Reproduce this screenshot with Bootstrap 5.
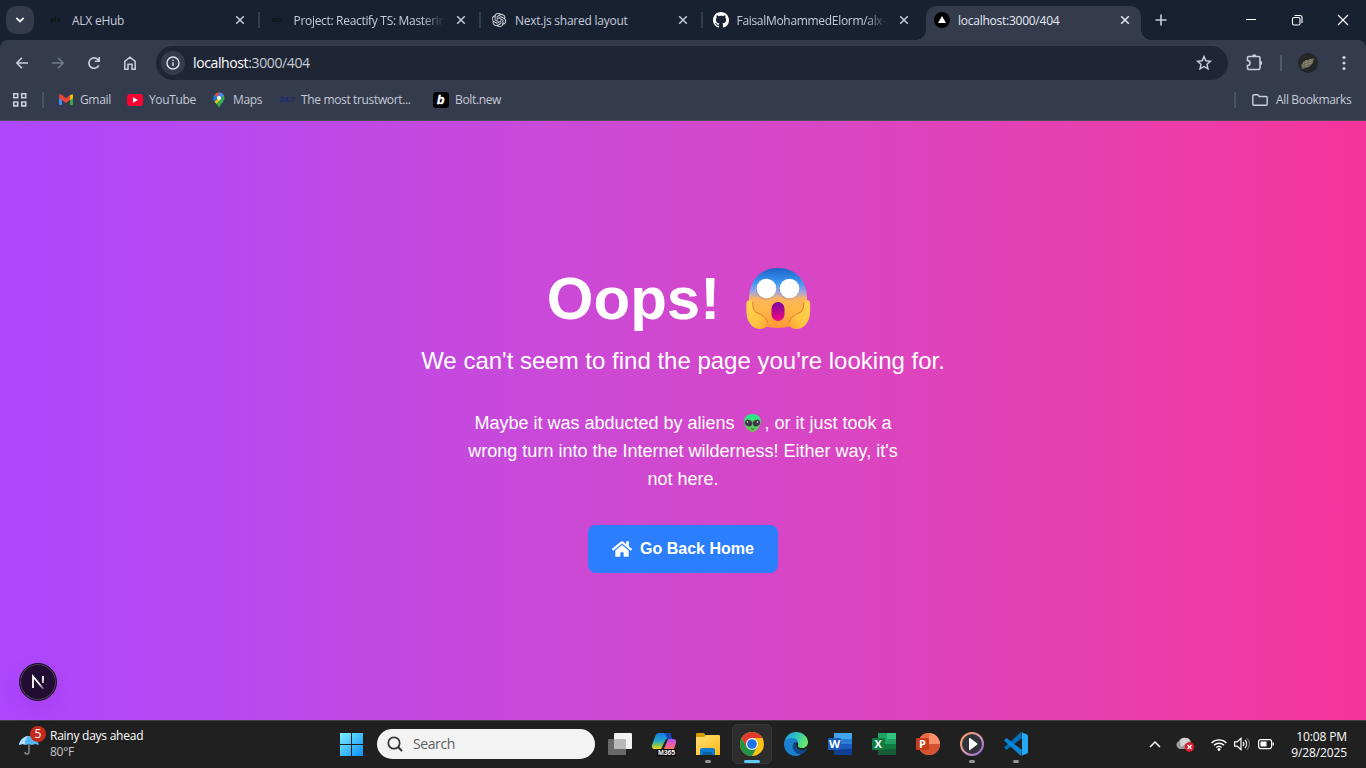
<!DOCTYPE html>
<html lang="en">
<head>
<meta charset="utf-8">
<meta name="viewport" content="width=device-width, initial-scale=1">
<title>localhost:3000/404</title>
<link rel="stylesheet" href="https://cdn.jsdelivr.net/npm/bootstrap@5.3.0/dist/css/bootstrap.min.css">
<style>
body{width:1366px;height:768px;overflow:hidden;font:12px/16px "Open Sans","Noto Sans",sans-serif;letter-spacing:-.25px;color:#c5cbdc;background:#202020}
svg{display:block;flex:none;overflow:visible}
.strip{height:40px;background:#182131}
.tabsearch{width:28px;height:28px;margin:6px 4px 0 6px;border-radius:10px;background:#333b4d}
.tabitem{width:221.5px;height:40px;padding-left:10px;position:relative}
.tabitem.sep::after{content:"";position:absolute;right:0;top:12px;width:2px;height:16px;background:#353e50}
.favbox{width:16px;height:16px;flex:none}
.tabtitle{width:151px;margin-left:8px;overflow:hidden;white-space:nowrap;padding-top:2px}
.fade-end{letter-spacing:-.31px;-webkit-mask-image:linear-gradient(90deg,#000 85%,transparent);mask-image:linear-gradient(90deg,#000 85%,transparent)}
.tabclose{margin-left:11.5px}
.activetab{width:215px;height:34px;margin:6px 0 0 2px;padding:0 0 6px 8px;background:#333b4d;border-radius:10px 10px 0 0;color:#e6e9f2;position:relative}
.activetab .tabclose{margin-left:11px}
.activetab::before,.activetab::after{content:"";position:absolute;bottom:0;width:10px;height:10px}
.activetab::before{left:-10px;background:radial-gradient(circle at 0 0,transparent 9.6px,#333b4d 10px)}
.activetab::after{right:-10px;background:radial-gradient(circle at 100% 0,transparent 9.6px,#333b4d 10px)}
.toolrow{height:45px;background:#333b4d;border-radius:8px 8px 0 0;padding-left:4px}
.toolwrap{background:#182131}
.cell36{width:36px;height:36px}
.omni{width:1072px;height:34px;margin-left:8px;border-radius:17px;background:#1e2636;padding:0 16px 0 5px;font-size:14px;letter-spacing:-.38px;color:#c5cad4}
.infob{width:24px;height:24px;border-radius:12px;background:#333b4d;margin-right:8px}
.marks{height:36px;background:#333b4d;border-bottom:1px solid #494e58;padding:0 0 5px 12px;color:#c7cad6;letter-spacing:-.35px}
.marks span{white-space:nowrap}
.vsep{width:2px;height:16px;background:#4a5265;flex:none}
.tinylogo{font:bold 7px/8px "DejaVu Sans",sans-serif;letter-spacing:-.3px;color:#0e1416}
.stage{height:599px;background:#d13fcb;background:linear-gradient(to right in oklab,#ad46ff,#f6339a);color:#fff;font-family:"Liberation Sans",Arial,sans-serif;letter-spacing:0;position:relative}
.stage h1{font-size:60px;line-height:60px;font-weight:700;margin-bottom:16px}
.sub{font-size:24px;line-height:32px;margin-bottom:32px}
.story{font-size:18px;line-height:28px;width:448px;margin-bottom:32px}
.homebtn{width:190px;height:48px;border-radius:8px;background:#2b7fff;border:0;font-size:16px;line-height:24px;font-weight:700;color:#fff;padding:0}
.devbadge{position:absolute;left:19px;top:542px;width:38px;height:38px;border-radius:50%;background:#220e33;border:1px solid #1b0d28;box-shadow:inset 0 0 0 1px #54425f,0 8px 20px rgba(90,20,140,.12)}
.taskbar{height:48px;background:#202020;border-top:1px solid #414141;color:#fff;padding:0 0 1px 19px}
.weather{width:321px}
.weathericon{width:31px;height:40px;position:relative}
.alertnum{position:absolute;left:11px;top:2px;width:16px;height:16px;border-radius:8px;background:#c42b1c;font-size:12px;line-height:16px;letter-spacing:0;text-align:center}
.searchbox{width:218px;height:30px;border-radius:15px;background:#f3f3f3;color:#5e5e5e;margin:0 3px 0 14px;padding:0 0 0 10px;font-size:14px;letter-spacing:-.4px}
.app{width:44px;height:46px;position:relative}
.app.open::before{content:"";position:absolute;left:2px;top:3px;width:40px;height:40px;border-radius:5px;background:#2d2d2d;border:1px solid #363636}
.app svg{position:relative}
.run::after{content:"";position:absolute;bottom:4px;left:19px;width:6px;height:3px;border-radius:2px;background:#979797}
.run.open::after{left:14px;width:16px;background:#5ec9f8}
.tray svg{margin-right:7px}
.clock{margin-right:19px;text-align:right;white-space:nowrap;letter-spacing:-.13px;padding-top:1px}
</style>
</head>
<body>
<svg width="0" height="0" style="position:absolute"><defs>
<symbol id="x" viewBox="0 0 10 10"><path d="M1.2 1.2l7.6 7.6M8.8 1.2L1.2 8.8" stroke="currentColor" stroke-width="1.5" fill="none"/></symbol>
<linearGradient id="win" x1="0" y1="0" x2="1" y2="1"><stop stop-color="#7df0ff"/><stop offset="1" stop-color="#0a8dfa"/></linearGradient>
<linearGradient id="face" x1="0" y1="0" x2="0" y2="1"><stop stop-color="#1c62c8"/><stop offset=".25" stop-color="#3f97f2"/><stop offset=".4" stop-color="#a3a6e0"/><stop offset=".52" stop-color="#ffb45c"/><stop offset=".7" stop-color="#ffb845"/><stop offset="1" stop-color="#ff9738"/></linearGradient>
<linearGradient id="hand" x1="0" y1="0" x2="1" y2="1"><stop stop-color="#ffd452"/><stop offset=".6" stop-color="#ffc644"/><stop offset="1" stop-color="#f9a030"/></linearGradient>
<linearGradient id="mouth" x1="0" y1="0" x2="0" y2="1"><stop stop-color="#7a07a0"/><stop offset="1" stop-color="#f7087f"/></linearGradient>
<linearGradient id="alien" x1="0" y1="0" x2="0" y2="1"><stop stop-color="#23ec91"/><stop offset="1" stop-color="#6fc04e"/></linearGradient>
<linearGradient id="fold" x1="0" y1="0" x2="1" y2="1"><stop stop-color="#ffdf77"/><stop offset="1" stop-color="#ffb915"/></linearGradient>
<linearGradient id="edge" x1="0" y1="0" x2="1" y2=".3"><stop stop-color="#229de0"/><stop offset=".55" stop-color="#2dc3c0"/><stop offset="1" stop-color="#69e66d"/></linearGradient>
<linearGradient id="media" x1="0" y1="0" x2="1" y2="1"><stop stop-color="#ff9b55"/><stop offset=".5" stop-color="#dc9cae"/><stop offset="1" stop-color="#8f64de"/></linearGradient>
<linearGradient id="copA" x1="0" y1="0" x2="0" y2="1"><stop stop-color="#1279e0"/><stop offset=".5" stop-color="#20a9cc"/><stop offset=".8" stop-color="#91c846"/><stop offset="1" stop-color="#ffd91c"/></linearGradient>
<linearGradient id="copB" x1="0" y1="0" x2="0" y2="1"><stop stop-color="#a753ef"/><stop offset=".5" stop-color="#eb5bae"/><stop offset="1" stop-color="#ff765e"/></linearGradient>
<linearGradient id="nfade" x1="0" y1="0" x2="1" y2="1"><stop offset=".6" stop-color="#fff"/><stop offset="1" stop-color="#fff" stop-opacity=".25"/></linearGradient>
</defs></svg>

<!-- Tab strip -->
<header class="strip d-flex">
  <div class="tabsearch d-flex align-items-center justify-content-center"><svg width="10" height="6"><path d="M1.3.8L5 4.4 8.700.8" stroke="#f0f2f8" stroke-width="1.8" fill="none"/></svg></div>
  <div class="tabitem sep d-flex align-items-center"><div class="favbox tinylogo pt-1" style="padding-left:2px">alx</div><div class="tabtitle">ALX eHub</div><svg class="tabclose" width="10" height="10"><use href="#x"/></svg></div>
  <div class="tabitem sep d-flex align-items-center"><div class="favbox tinylogo pt-1" style="padding-left:2px">alx</div><div class="tabtitle fade-end">Project: Reactify TS: Mastering</div><svg class="tabclose" width="10" height="10"><use href="#x"/></svg></div>
  <div class="tabitem sep d-flex align-items-center"><svg class="favbox" width="16" height="16" viewBox="-1 -1 18 18" fill="#dfe2e8"><path d="M14.949 6.547a3.940 3.940 0 0 0-.348-3.273 4.110 4.110 0 0 0-4.400-1.934A4.100 4.100 0 0 0 8.423.2 4.150 4.150 0 0 0 6.305.086a4.100 4.100 0 0 0-1.891.948 4.040 4.040 0 0 0-1.158 1.753 4.100 4.100 0 0 0-1.563.679A4 4 0 0 0 .554 4.720a3.990 3.990 0 0 0 .502 4.731 3.940 3.940 0 0 0 .346 3.274 4.110 4.110 0 0 0 4.402 1.933c.382.425.852.764 1.377.995.526.231 1.095.35 1.670.346 1.780.002 3.358-1.132 3.901-2.804a4.100 4.100 0 0 0 1.563-.68 4 4 0 0 0 1.140-1.253 3.990 3.990 0 0 0-.506-4.716m-6.097 8.406a3.050 3.050 0 0 1-1.945-.694l.096-.054 3.230-1.838a.53.53 0 0 0 .265-.455v-4.490l1.366.778q.02.011.025.035v3.722c-.003 1.653-1.361 2.992-3.037 2.996m-6.530-2.750a2.950 2.950 0 0 1-.36-2.010l.095.057L5.290 12.090a.53.53 0 0 0 .527 0l3.949-2.246v1.555a.05.05 0 0 1-.022.041L6.473 13.300c-1.454.826-3.311.335-4.150-1.098m-.85-6.940A3.020 3.020 0 0 1 3.070 3.949v3.785a.51.51 0 0 0 .262.451l3.930 2.237-1.366.779a.05.05 0 0 1-.048 0L2.585 9.342a2.980 2.980 0 0 1-1.113-4.094zm11.216 2.571L8.747 5.576l1.362-.776a.05.05 0 0 1 .048 0l3.265 1.860a3 3 0 0 1 1.173 1.207 2.960 2.960 0 0 1-.27 3.200 3.050 3.050 0 0 1-1.360.997V8.279a.52.52 0 0 0-.276-.445m1.360-2.015-.097-.057-3.226-1.855a.53.53 0 0 0-.53 0L6.249 6.153V4.598a.04.04 0 0 1 .019-.04L9.533 2.700a3.070 3.070 0 0 1 3.257.139c.474.325.843.778 1.066 1.303.223.526.289 1.103.191 1.664zM5.503 8.575 4.139 7.800a.05.05 0 0 1-.026-.037V4.049c0-.57.166-1.127.476-1.607s.752-.864 1.275-1.105a3.080 3.080 0 0 1 3.234.41l-.096.054-3.230 1.838a.53.53 0 0 0-.265.455zm.742-1.577 1.758-1 1.762 1v2l-1.755 1-1.762-1z"/></svg><div class="tabtitle">Next.js shared layout</div><svg class="tabclose" width="10" height="10"><use href="#x"/></svg></div>
  <div class="tabitem d-flex align-items-center"><svg class="favbox" width="16" height="16" viewBox="0 0 16 16" fill="#fff"><path d="M8 0C3.58 0 0 3.58 0 8c0 3.54 2.29 6.53 5.47 7.59.4.07.55-.17.55-.38 0-.19-.01-.82-.01-1.49-2.01.37-2.53-.49-2.69-.94-.09-.23-.48-.94-.82-1.13-.28-.15-.68-.52-.01-.53.63-.01 1.08.58 1.23.82.72 1.21 1.87.87 2.33.66.07-.52.28-.87.51-1.07-1.78-.2-3.64-.89-3.64-3.95 0-.87.31-1.59.82-2.15-.08-.2-.36-1.02.08-2.12 0 0 .67-.21 2.2.82.64-.18 1.32-.27 2-.27s1.36.09 2 .27c1.53-1.04 2.2-.82 2.2-.82.44 1.1.16 1.92.08 2.12.51.56.82 1.27.82 2.15 0 3.07-1.87 3.75-3.65 3.95.29.25.54.73.54 1.48 0 1.07-.01 1.93-.01 2.2 0 .21.15.46.55.38A8.01 8.01 0 0 0 16 8c0-4.42-3.58-8-8-8z"/></svg><div class="tabtitle fade-end">FaisalMohammedElorm/alx-project</div><svg class="tabclose" width="10" height="10"><use href="#x"/></svg></div>
  <div class="activetab d-flex align-items-center"><svg width="16" height="16"><circle cx="8" cy="8" r="8" fill="#000"/><path d="M8 4l4 7H4z" fill="#fff"/></svg><div class="tabtitle">localhost:3000/404</div><svg class="tabclose" width="10" height="10"><use href="#x"/></svg></div>
  <svg width="225" height="40"><path d="M14.500 20h11M20 14.500v11" stroke="#c6cce0" stroke-width="1.6"/><g stroke="#fff" stroke-width="1.1" fill="none"><path d="M105 19.500h10M197 15l10 10M207 15l-10 10"/><rect x="151.500" y="17.500" width="7.500" height="7.500" rx="1.500"/><path d="M153.500 15.500h5.500a2 2 0 0 1 2 2v5.500"/></g></svg>
</header>

<!-- Address bar -->
<div class="toolwrap"><nav class="toolrow d-flex align-items-center">
  <div class="cell36 d-flex align-items-center justify-content-center"><svg width="12" height="12" fill="none" stroke="#c8cedf" stroke-width="1.6"><path d="M12 6H1M6 .7L.9 6 6 11.300"/></svg></div>
  <div class="cell36 d-flex align-items-center justify-content-center"><svg width="12" height="12" fill="none" stroke="#71798b" stroke-width="1.6"><path d="M0 6h11M6 .7L11.100 6 6 11.300"/></svg></div>
  <div class="cell36 d-flex align-items-center justify-content-center"><svg width="12" height="12" fill="none" stroke="#c8cedf" stroke-width="1.6"><path d="M10.800 8.300A5.200 5.200 0 1 1 9.700 2.300L11 3.700M11.200 0v4.300H6.800"/></svg></div>
  <div class="cell36 d-flex align-items-center justify-content-center"><svg width="12" height="14" fill="none" stroke="#c8cedf" stroke-width="1.5"><path d="M.8 5.300L6 1.200l5.200 4.100v7.900H8V8.200H4v5H.8z"/></svg></div>
  <div class="omni d-flex align-items-center">
    <div class="infob d-flex align-items-center justify-content-center"><svg width="14" height="14"><circle cx="7" cy="7" r="6" fill="none" stroke="#e3e6ef" stroke-width="1.4"/><path d="M7 6.200V10M7 3.700v1.400" stroke="#e3e6ef" stroke-width="1.4"/></svg></div>
    <div class="flex-grow-1"><span class="text-white">localhost</span>:3000/404</div>
    <svg width="16" height="16" fill="none" stroke="#cdd2df" stroke-width="1.4"><path d="M8 1.500l1.800 4.300 4.700.4-3.500 3.100 1 4.600-4-2.400-4 2.400 1-4.600-3.500-3.100 4.700-.4z"/></svg>
  </div>
  <svg width="138" height="36" fill="none"><path d="M20.500 11.500h10a1.500 1.500 0 0 1 1.500 1.500v10a1.500 1.500 0 0 1-1.500 1.500h-10a1.500 1.500 0 0 1-1-1.500v-2.500a2.500 2.500 0 0 0 0-5V13a1.500 1.500 0 0 1 1-1.500z" stroke="#c8cedf" stroke-width="1.600"/><path d="M24 11.500a2.200 2.200 0 0 1 4.400 0zM32 15.800a2.200 2.200 0 0 1 0 4.400z" fill="#c8cedf"/><path d="M53 10v16" stroke="#515a6c" stroke-width="2"/><circle cx="80" cy="18" r="10" fill="#242628"/><path d="M73 20l3-4 10-3-1 5-4 4-7 2z" fill="#6c6757"/><path d="M75 18l10-3M75 21l8-3M78 15l1 7M82 14l1 6" stroke="#b0a98e" stroke-width=".8" stroke-dasharray="1 1"/><g fill="#c8cedf"><circle cx="116" cy="12.500" r="1.600"/><circle cx="116" cy="18" r="1.600"/><circle cx="116" cy="23.500" r="1.600"/></g></svg>
</nav></div>

<!-- Bookmarks -->
<nav class="marks d-flex align-items-center">
  <svg width="16" height="14" style="margin-right:14px" fill="none" stroke="#c8cddd" stroke-width="1.6"><path d="M1.800.8h3.900v3.900H1.800zM9.800.8h3.900v3.900H9.800zM1.800 9h3.900v3.900H1.800zM9.800 9h3.900v3.900H9.800z"/></svg>
  <i class="vsep"></i>
  <svg width="14" height="12" style="margin:0 7px 0 15px"><path d="M0 2v8a1 1 0 0 0 1 1h2V4z" fill="#4285f4"/><path d="M14 2v8a1 1 0 0 1-1 1h-2V4z" fill="#34a853"/><path d="M11 1.200L13 .2a1 1 0 0 1 1 1.200V4l-3 2.500z" fill="#fbbc04"/><path d="M0 1.500C0 .2 1.500-.2 2.500.6L7 4.200 11 1v5L7 9 0 4z" fill="#ea4335"/></svg>
  <span style="width:47px">Gmail</span>
  <svg width="16" height="12" style="margin-right:6px"><rect width="16" height="12" rx="3" fill="#ff0033"/><path d="M6 3.300L11 6 6 8.700z" fill="#fff"/></svg>
  <span style="width:63px">YouTube</span>
  <svg width="14" height="16" viewBox="0 0 14 16" style="margin-right:7px"><path d="M7 .5a5.500 5.500 0 0 1 5.500 5.500c0 4-4 5.500-5.500 10C5.500 11.500 1.500 10 1.500 6A5.500 5.500 0 0 1 7 .5z" fill="#34a853"/><path d="M7 .5A5.500 5.500 0 0 0 2.800 2.500L5.500 5 9 1z" fill="#ea4335"/><path d="M8 .6L5.500 4.500l3 2 3.200-3.500A5.500 5.500 0 0 0 8 .6z" fill="#4285f4"/><path d="M5.500 7.500l-3 2.200 1.800 2L9 7z" fill="#fbbc04"/><path d="M2.800 2.500A5.500 5.500 0 0 0 2.500 9.500L5 7z" fill="#1a73e8"/><circle cx="7" cy="6" r="2" fill="#fff"/></svg>
  <span style="width:46px">Maps</span>
  <b class="tinylogo" style="width:22px;color:#1f2c73;font-style:italic">24/7</b>
  <span style="width:132px">The most trustwort...</span>
  <svg width="16" height="16" style="margin-right:6px"><rect width="16" height="16" rx="3.500" fill="#000"/><text x="4" y="12" font-family="Liberation Sans" font-size="12" font-weight="700" font-style="italic" fill="#fff" stroke="#fff" stroke-width=".5">b</text></svg>
  <span>Bolt.new</span>
  <i class="vsep ms-auto"></i>
  <svg width="16" height="12" fill="none" stroke="#c8cddd" stroke-width="1.400" style="margin:0 8px 0 16px"><path d="M.8 2A1.200 1.200 0 0 1 2 .8h3.800l1.500 1.700H14a1.200 1.200 0 0 1 1.200 1.200V10a1.200 1.200 0 0 1-1.200 1.200H2A1.200 1.200 0 0 1 .8 10z"/></svg>
  <span style="width:90px">All Bookmarks</span>
</nav>

<!-- Not-found page -->
<main class="stage d-flex flex-column align-items-center justify-content-center text-center">
  <h1 class="d-flex">Oops!<svg width="82" height="60" style="margin-left:17px"><g transform="translate(9 -1)">
    <path d="M32 0C50 0 61 13 61 31 61 49 52 60 32 60S3 49 3 31C3 13 14 0 32 0z" fill="url(#face)"/>
    <circle cx="20" cy="22" r="9.800" fill="#6f6f99" opacity=".3"/><circle cx="43" cy="22" r="9.800" fill="#6f6f99" opacity=".3"/><circle cx="20.500" cy="20.500" r="9.800" fill="#fff"/><circle cx="43.500" cy="20.500" r="9.800" fill="#fff"/>
    <rect x="25.500" y="34" width="13" height="19" rx="6.500" fill="url(#mouth)"/>
    <g id="palm"><path d="M.5 34q2.500-4 6 0 0 7 3 10 12 5 12 11 0 6-8 6Q7 61 3 54-.5 49 .5 34z" fill="url(#hand)"/><path d="M6.500 34q0 7 3 10 12 5 12 11" stroke="#e07f2c" stroke-width="1" fill="none"/></g><use href="#palm" transform="matrix(-1 0 0 1 64.500 0)"/></g></svg></h1>
  <p class="sub">We can't seem to find the page you're looking for.</p>
  <p class="story">Maybe it was abducted by aliens <svg class="d-inline-block" width="25" height="18" viewBox="0 0 25 18" style="vertical-align:-3px"><path d="M12.500 0C17.500 0 21 3 21 7.500S16 18 12.500 18 4 12 4 7.500 7.500 0 12.500 0z" fill="url(#alien)"/><ellipse cx="8.500" cy="9" rx="3.800" ry="3.200" transform="rotate(30 8.500 9)" fill="#403645"/><ellipse cx="16.500" cy="9" rx="3.800" ry="3.200" transform="rotate(-30 16.500 9)" fill="#403645"/><circle cx="7.500" cy="8" r=".9" fill="#b8b3bd"/><circle cx="17.500" cy="8" r=".9" fill="#b8b3bd"/><path d="M11 14.700q1.500 1 3 0" stroke="#315b34" fill="none"/></svg>, or it just took a wrong turn into the Internet wilderness! Either way, it's not here.</p>
  <button class="btn homebtn d-flex align-items-center justify-content-center gap-2"><svg width="20" height="20" viewBox="0 0 576 512" fill="#fff"><path d="M280.370 148.260L96 300.110V464a16 16 0 0 0 16 16l112.060-.29a16 16 0 0 0 15.920-16V368a16 16 0 0 1 16-16h64a16 16 0 0 1 16 16v95.640a16 16 0 0 0 16 16.050L464 480a16 16 0 0 0 16-16V300L295.670 148.260a12.190 12.190 0 0 0-15.300 0zM571.600 251.470L488 182.560V44.050a12 12 0 0 0-12-12h-56a12 12 0 0 0-12 12v72.610L318.470 43a48 48 0 0 0-61 0L4.340 251.470a12 12 0 0 0-1.600 16.900l25.500 31A12 12 0 0 0 45.150 301l235.220-193.740a12.190 12.190 0 0 1 15.300 0L530.900 301a12 12 0 0 0 16.900-1.600l25.500-31a12 12 0 0 0-1.700-16.930z"/></svg>Go Back Home</button>
  <div class="devbadge d-flex align-items-center justify-content-center"><svg width="14" height="14"><path d="M2 13V1.500L12.500 14M12 1v7" stroke="url(#nfade)" stroke-width="1.800" fill="none"/></svg></div>
</main>

<!-- Taskbar -->
<footer class="taskbar d-flex align-items-center">
  <div class="weather d-flex align-items-center"><div class="weathericon"><svg width="20" height="40"><path d="M0 21C1 15 6 12 10 12s9 3 10 9l-4-1-3 1-3-1-3 1-3-1z" fill="#55b5f3"/><path d="M0 21c1-6 6-9 10-9-4 3-4 6-4 8.500l-3-.5z" fill="#b4dcff"/><path d="M10 20v8q0 2-2 2t-2-2" stroke="#8c8c8c" stroke-width="1.400" fill="none"/></svg><span class="alertnum">5</span></div><div><div>Rainy days ahead</div><div style="color:#c6c6c6">80°F</div></div></div>
  <svg width="23" height="23" fill="url(#win)"><path d="M0 0h23v23H0z"/><path d="M11 0h1v23h-1zM0 11h23v1H0z" fill="#202020"/></svg>
  <div class="searchbox d-flex align-items-center"><svg width="16" height="16" style="margin-right:10px" fill="none" stroke="#333" stroke-width="1.700"><circle cx="7" cy="7" r="5.700"/><path d="M11 11l4 4" stroke-width="2"/></svg>Search</div>
  <div class="app d-flex align-items-center justify-content-center"><svg width="24" height="24"><rect x="6" y="1" width="18" height="16" rx="1" fill="#f1f1f1"/><rect y="7" width="18" height="16" rx="1" fill="#777" opacity=".85"/><path d="M6 7h12v10H6z" fill="#b8b8b8"/></svg></div>
  <div class="app d-flex align-items-center justify-content-center"><svg width="24" height="24"><path d="M7 1h10q2 0 2 3l1 3h-6L9 17H3q-4 0-3-4L3 5q1-4 4-4z" fill="url(#copA)"/><path d="M12 1h5q2 0 2 3l1 3h-5q-1-5-3-6z" fill="#1746b9"/><path d="M16 7h5q4 0 3 4l-2 6H12z" fill="url(#copB)"/><path d="M5 17h19v7H5z" fill="#000"/><text x="6" y="23" font-family="Liberation Sans" font-size="7" font-weight="700" fill="#fff" textLength="17">M365</text></svg></div>
  <div class="app run d-flex align-items-center justify-content-center"><svg width="24" height="24"><path d="M0 2q0-1 1-1h7l3 4H0z" fill="#d79b05"/><path d="M0 5h8l2-2h13q1 0 1 1v19H0z" fill="url(#fold)"/><path d="M4 23v-5q0-2 2-2h11q2 0 2 2v5z" fill="#0d79d0"/><path d="M7 20h9v3H7z" fill="#0c5f9f"/></svg></div>
  <div class="app run open d-flex align-items-center justify-content-center"><svg width="24" height="24"><circle cx="12" cy="12" r="12" fill="#fbc116"/><path d="M1.600 6A12 12 0 0 0 12 24L17.200 15 6.800 15z" fill="#229342"/><path d="M1.600 6A12 12 0 0 1 22.400 6H12L6.800 15z" fill="#e33b2e"/><circle cx="12" cy="12" r="6" fill="#fff"/><circle cx="12" cy="12" r="4.800" fill="#1a73e8"/></svg></div>
  <div class="app d-flex align-items-center justify-content-center"><svg width="24" height="24"><path d="M0 12C1 4 6 0 12 0c7 0 12 5 12 10 0 4-3 6-6 6-3 0-5-1-4-3 1-3-2-6-6-6-4 0-7 2-8 5z" fill="url(#edge)"/><path d="M0 12C0 8 4 6 8 6c4 0 6 3 6 5-3-2-6 1-5 5 1 3 4 6 8 6-1 1-3 2-5 2C5 24 0 19 0 12z" fill="#1b7fd2"/><path d="M12.500 10C10 11 9 13 9 15c0 5 5 8 9 7 2-1 4-3 5-5 0-1 0-1-1 0-3 2-10 1-10-4 0-1 0-2 .5-3z" fill="#114a8b"/></svg></div>
  <div class="app d-flex align-items-center justify-content-center"><svg width="24" height="24"><path d="M6 1h18v6H6z" fill="#41a5ee"/><path d="M6 7h18v5H6z" fill="#2b7cd3"/><path d="M6 12h18v5H6z" fill="#185abd"/><path d="M6 17h18v6H6z" fill="#103f91"/><rect y="6" width="13" height="12" rx="1" fill="#185abd"/><text x="1" y="16" font-family="Open Sans" font-size="11" font-weight="700" fill="#fff" textLength="11" lengthAdjust="spacingAndGlyphs">W</text></svg></div>
  <div class="app d-flex align-items-center justify-content-center"><svg width="24" height="24"><path d="M6 1h18v22H6z" fill="#21a366"/><path d="M15 1h9v6h-9z" fill="#33c481"/><path d="M6 12h9v5H6z" fill="#107c41"/><path d="M15 12h9v5h-9z" fill="#107c41"/><path d="M6 17h18v6H6z" fill="#185c37"/><rect y="6" width="13" height="12" rx="1" fill="#107c41"/><text x="2.500" y="16" font-family="Open Sans" font-size="11" font-weight="700" fill="#fff">X</text></svg></div>
  <div class="app d-flex align-items-center justify-content-center"><svg width="24" height="24"><circle cx="13" cy="12" r="11" fill="#ff8f6b"/><path d="M2 12h22A11 11 0 0 1 2 12z" fill="#d35230"/><path d="M13 1v11H2A11 11 0 0 1 13 1z" fill="#ed6c47"/><rect y="6" width="13" height="12" rx="1" fill="#c43e1c"/><text x="3" y="16" font-family="Open Sans" font-size="11" font-weight="700" fill="#fff">P</text></svg></div>
  <div class="app run d-flex align-items-center justify-content-center"><svg width="24" height="24"><circle cx="12" cy="12" r="11" fill="#30333a" stroke="url(#media)" stroke-width="2"/><path d="M9 6.500q0-1 1-.4l7 5.100q1 .8 0 1.600l-7 5.100q-1 .6-1-.4z" fill="#fff"/></svg></div>
  <div class="app run d-flex align-items-center justify-content-center"><svg width="24" height="24"><path d="M17 0L0 15.500 2.500 18 18 6z" fill="#0070b8"/><path d="M17 24L0 8.500 2.500 6 18 18z" fill="#0a86d8"/><path d="M17 0l6 2.500q1 .5 1 1.500v16q0 1-1 1.500L17 24q1-.5 1-2V2q0-1.500-1-2z" fill="#29a8f2"/></svg></div>
  <div class="tray ms-auto d-flex align-items-center">
    <svg width="12" height="8" style="margin-right:17px"><path d="M1 7l5-5 5 5" stroke="#fff" stroke-width="1.500" fill="none"/></svg>
    <svg width="17" height="16" style="margin-right:16px"><path d="M0 12a4 4 0 0 1 1-7q2-4 7-3 4 0 5 4v7H1z" fill="#9a9a9a"/><path d="M2 5q2-4 6-3 3 0 4 3L3 11z" fill="#d2d2d2"/><circle cx="11.500" cy="11" r="4.800" fill="#d51b2b"/><path d="M9.500 9l4 4M13.500 9l-4 4" stroke="#fff" stroke-width="1.300"/></svg>
    <svg width="16" height="13" fill="none" stroke="#fff" stroke-width="1.300"><path d="M.6 5a10.500 10.500 0 0 1 14.800 0M3 7.300a7.100 7.100 0 0 1 10 0M5.300 9.600a3.800 3.800 0 0 1 5.400 0"/><circle cx="8" cy="11.500" r=".8" fill="#fff"/></svg>
    <svg width="17" height="14" fill="none" stroke="#fff" stroke-width="1.200"><path d="M.6 4.800h2.600L7 1.300v11.400L3.200 9.200H.6zM9 5a3 3 0 0 1 0 4M11 3a6 6 0 0 1 0 8"/><path d="M13 1.300a8 8 0 0 1 0 11.400" stroke="#6d6d6d"/></svg>
    <svg width="17" height="12" style="margin-right:16px"><rect x=".6" y="1.600" width="13" height="9" rx="2" fill="none" stroke="#fff" stroke-width="1.200"/><path d="M2.500 3.500h6v5h-6zM14.500 4.500h1.300v3h-1.300z" fill="#fff"/></svg>
  </div>
  <div class="clock"><div>10:08 PM</div><div>9/28/2025</div></div>
</footer>
<script src="https://cdn.jsdelivr.net/npm/bootstrap@5.3.0/dist/js/bootstrap.bundle.min.js"></script>
</body>
</html>
